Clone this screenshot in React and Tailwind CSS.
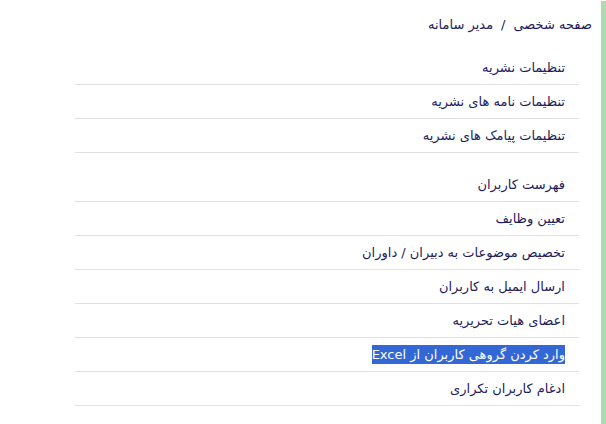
export default function App() {
  const group1 = ["تنظیمات نشریه", "تنظیمات نامه های نشریه", "تنظیمات پیامک های نشریه"];
  const group2 = [
    "فهرست کاربران",
    "تعیین وظایف",
    "تخصیص موضوعات به دبیران / داوران",
    "ارسال ایمیل به کاربران",
    "اعضای هیات تحریریه",
    "SEL",
    "ادغام کاربران تکراری",
  ];
  const Row = ({ t }) => (
    <div className="h-[34px] border-b border-[#dee2e6] flex items-center pr-[14px]">
      {t === "SEL" ? (
        <span className="bg-[#3367d6] text-white leading-[19px]">وارد کردن گروهی کاربران از Excel</span>
      ) : (
        <span>{t}</span>
      )}
    </div>
  );
  return (
    <div
      dir="rtl"
      className="w-[606px] h-[424px] bg-white flex text-[13px] text-[#1c1c5e] overflow-hidden"
      style={{ fontFamily: '"DejaVu Sans", sans-serif' }}
    >
      <div className="w-[5px] bg-[#addbac] shrink-0 mt-[1px]" />
      <div className="flex-1 flex flex-col">
        <div className="h-[48px] flex items-center pr-[9px] pt-[1px]">
          <span>صفحه شخصی</span>
          <span className="mx-[8px]">/</span>
          <span>مدیر سامانه</span>
        </div>
        <div className="mr-[22px] w-[504px] flex flex-col">
          <div className="mt-[3px]">
            {group1.map((t) => (
              <Row key={t} t={t} />
            ))}
          </div>
          <div className="mt-[15px]">
            {group2.map((t) => (
              <Row key={t} t={t} />
            ))}
          </div>
        </div>
      </div>
    </div>
  );
}
